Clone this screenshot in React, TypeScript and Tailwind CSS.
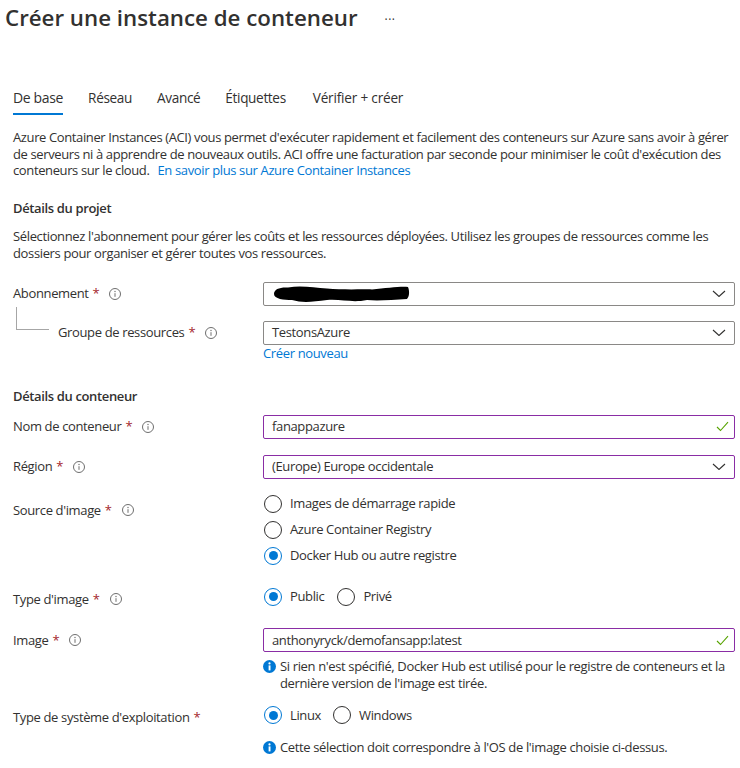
import React from "react";

const Req = () => <span className="text-[#a4262c] ml-1">*</span>;

const InfoIcon = ({ className = "" }: { className?: string }) => (
  <svg viewBox="0 0 12 12" className={`w-[12px] h-[12px] shrink-0 ${className}`} fill="none">
    <circle cx="6" cy="6" r="5.5" stroke="#6e6e6e" strokeWidth="1" />
    <path d="M6 5.2v3.6" stroke="#6e6e6e" strokeWidth="1" />
    <circle cx="6" cy="3.5" r="0.7" fill="#6e6e6e" />
  </svg>
);

const SolidInfo = () => (
  <svg viewBox="0 0 13 13" className="w-[13px] h-[13px] shrink-0 mt-[2px]">
    <circle cx="6.5" cy="6.5" r="6.5" fill="#0078d4" />
    <rect x="5.6" y="5.4" width="1.9" height="5" fill="#fff" />
    <circle cx="6.5" cy="3.4" r="1.1" fill="#fff" />
  </svg>
);

const Chevron = () => (
  <svg viewBox="0 0 14 7" className="w-[14px] h-[7px] mr-[8px] shrink-0" fill="none">
    <path d="M1 1l6 5.5L13 1" stroke="#323130" strokeWidth="1.1" />
  </svg>
);

const Check = () => (
  <svg viewBox="0 0 13 11" className="w-[13px] h-[11px] mr-[5px] shrink-0" fill="none">
    <path d="M1 6l3.5 3.5L12 1.2" stroke="#57a300" strokeWidth="1.1" />
  </svg>
);

const Field = ({
  value,
  touched,
  icon,
  children,
}: {
  value?: string;
  touched?: boolean;
  icon: "chevron" | "check";
  children?: React.ReactNode;
}) => (
  <div
    className={`w-[472px] h-[24px] shrink-0 flex items-center justify-between pl-2 border rounded-[2px] bg-white ${
      touched ? "border-[#8a2da5]" : "border-[#8a8886]"
    }`}
  >
    {children ? children : <span>{value}</span>}
    {icon === "chevron" ? <Chevron /> : <Check />}
  </div>
);

const Radio = ({ label, checked }: { label: string; checked?: boolean }) => (
  <div className="flex items-center gap-2 h-[18px]">
    <span
      className={`w-[18px] h-[18px] rounded-full border flex items-center justify-center shrink-0 ${
        checked ? "border-[#0078d4]" : "border-[#323130]"
      }`}
    >
      {checked && <span className="w-[9px] h-[9px] rounded-full bg-[#0078d4]" />}
    </span>
    <span>{label}</span>
  </div>
);

const Label = ({ text, required = true, info = true }: { text: string; required?: boolean; info?: boolean }) => (
  <div className="w-[250px] shrink-0 flex items-center">
    <span>{text}</span>
    {required && <Req />}
    {info && <InfoIcon className="ml-[10px]" />}
  </div>
);

export default function App() {
  return (
    <div className="w-[740px] h-[768px] overflow-hidden bg-white text-[#323130] text-[13px] leading-[16.6px] font-['Open_Sans',sans-serif] tracking-[-0.36px]">
      <div className="flex items-center pl-[5px] h-[36px]">
        <h1 className="text-[22.3px] leading-[36px] font-semibold tracking-[0px]">Créer une instance de conteneur</h1>
        <span className="ml-[27px] mt-[4px] text-[12px] tracking-[0.5px]">···</span>
      </div>

      <div className="pl-[13px]">
        {/* Tabs */}
        <div className="flex gap-[25px] mt-[52px] h-[26px] text-[13.6px] tracking-[-0.35px]">
          <div className="border-b-2 border-[#0078d4] font-medium text-[14px] h-[27px] leading-[20px]">De base</div>
          <div className="leading-[20px]">Réseau</div>
          <div className="leading-[20px]">Avancé</div>
          <div className="leading-[20px]">Étiquettes</div>
          <div className="ml-[2px] leading-[20px] tracking-[-0.2px]">Vérifier + créer</div>
        </div>

        <p className="mt-[15px] w-[716px] tracking-[-0.38px]">
          Azure Container Instances (ACI) vous permet d'exécuter rapidement et facilement des conteneurs sur Azure sans avoir à gérer
          de serveurs ni à apprendre de nouveaux outils. ACI offre une facturation par seconde pour minimiser le coût d'exécution des
        </p>
        <div className="flex gap-[8px] tracking-[-0.38px]">
          <span>conteneurs sur le cloud.</span>
          <span className="text-[#0078d4] tracking-[-0.36px]">En savoir plus sur Azure Container Instances</span>
        </div>

        <h2 className="mt-[21px] font-semibold">Détails du projet</h2>
        <p className="mt-[12px] w-[714px]">
          Sélectionnez l'abonnement pour gérer les coûts et les ressources déployées. Utilisez les groupes de ressources comme les
          dossiers pour organiser et gérer toutes vos ressources.
        </p>

        {/* Project fields */}
        <div className="mt-[20px] flex items-center">
          <Label text="Abonnement" />
          <Field icon="chevron">
            <svg viewBox="0 0 140 18" className="w-[140px] h-[18px]">
              <path
                d="M2 9C2 4 8 2 16 2.5C30 0 42 3 55 3.5C70 5 90 4 100 4.5C115 3 130 1 136 2C138 7 137 12 135 14C120 15 105 16 95 15C80 18 70 14 55 15C40 17 30 18 20 15C12 15 2 14 2 9Z"
                fill="#000"
              />
            </svg>
          </Field>
        </div>
        <div className="relative mt-[15px] flex items-center">
          <div className="absolute left-[3px] -top-[14px] w-[33px] h-[23px] border-l border-b border-[#a6a6a6]" />
          <div className="w-[250px] shrink-0 pl-[45px] flex items-center">
            <span>Groupe de ressources</span>
            <Req />
            <InfoIcon className="ml-[10px]" />
          </div>
          <Field icon="chevron" value="TestonsAzure" />
        </div>
        <div className="ml-[250px] text-[#0078d4] leading-[16px]">Créer nouveau</div>

        <h2 className="mt-[27px] font-semibold leading-[17px]">Détails du conteneur</h2>

        {/* Container fields */}
        <div className="mt-[10px] flex items-center">
          <Label text="Nom de conteneur" />
          <Field icon="check" touched value="fanappazure" />
        </div>
        <div className="mt-[16px] flex items-center">
          <Label text="Région" />
          <Field icon="chevron" touched value="(Europe) Europe occidentale" />
        </div>

        <div className="mt-[16px] flex">
          <div className="pt-[7px]">
            <Label text="Source d'image" />
          </div>
          <div className="ml-[1px] flex flex-col gap-2">
            <Radio label="Images de démarrage rapide" />
            <Radio label="Azure Container Registry" />
            <Radio label="Docker Hub ou autre registre" checked />
          </div>
        </div>

        <div className="mt-[23px] flex">
          <div className="pt-[3px]">
            <Label text="Type d'image" />
          </div>
          <div className="ml-[1px] flex gap-[13px]">
            <Radio label="Public" checked />
            <Radio label="Privé" />
          </div>
        </div>

        <div className="mt-[21px] flex items-center">
          <Label text="Image" />
          <Field icon="check" touched value="anthonyryck/demofansapp:latest" />
        </div>
        <div className="ml-[250px] mt-[6px] w-[472px] flex gap-1">
          <SolidInfo />
          <p>
            Si rien n'est spécifié, Docker Hub est utilisé pour le registre de conteneurs et la dernière version de l'image est tirée.
          </p>
        </div>

        <div className="mt-[15px] flex">
          <div className="pt-[3px]">
            <Label text="Type de système d'exploitation" info={false} />
          </div>
          <div className="ml-[1px] flex gap-[12px]">
            <Radio label="Linux" checked />
            <Radio label="Windows" />
          </div>
        </div>
        <div className="ml-[250px] mt-[13px] flex gap-1">
          <SolidInfo />
          <p>Cette sélection doit correspondre à l'OS de l'image choisie ci-dessus.</p>
        </div>
      </div>
    </div>
  );
}
